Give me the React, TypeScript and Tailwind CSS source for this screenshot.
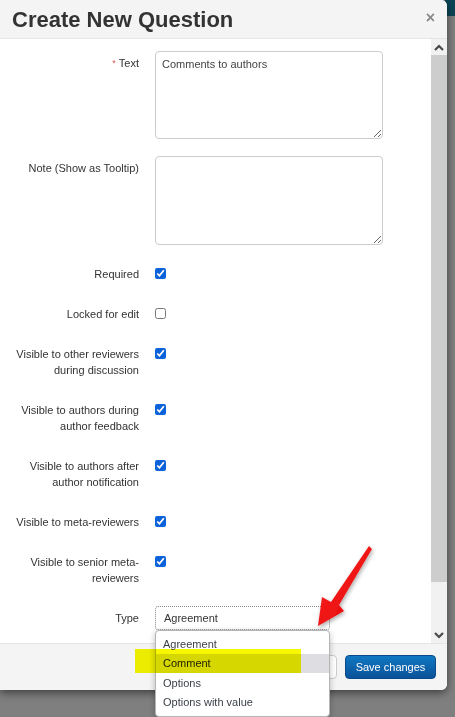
import React from "react";

const checkRows: { label: string; checked: boolean }[] = [
  { label: "Required", checked: true },
  { label: "Locked for edit", checked: false },
  { label: "Visible to other reviewers during discussion", checked: true },
  { label: "Visible to authors during author feedback", checked: true },
  { label: "Visible to authors after author notification", checked: true },
  { label: "Visible to meta-reviewers", checked: true },
  { label: "Visible to senior meta-reviewers", checked: true },
];

const options = ["Agreement", "Comment", "Options", "Options with value"];

const Chevron = ({ up }: { up?: boolean }) => (
  <svg width="10" height="7" viewBox="0 0 10 7" className="block">
    <polyline
      points={up ? "1,6 5,2 9,6" : "1,1 5,5 9,1"}
      fill="none"
      stroke="#4a4a4a"
      strokeWidth="2.2"
    />
  </svg>
);

const FormRow = ({ label, children, required }: { label: string; children: React.ReactNode; required?: boolean }) => (
  <div className="flex items-start gap-[16px]">
    <div className="w-[134px] shrink-0 text-right pt-[4px] leading-[16px]">
      {required && <span className="text-[#d9534f] text-[9px] align-top mr-[3px]">*</span>}
      {label}
    </div>
    {children}
  </div>
);

export default function App() {
  return (
    <div className="relative w-[455px] h-[717px] overflow-hidden bg-[#7f7f7f] font-['Liberation_Sans',Arial,sans-serif] text-[11px] text-[#333]">
      {/* page navbar peeking behind overlay */}
      <div className="absolute right-0 top-0 w-[10px] h-[16px] bg-[#0d4556]" />

      <div className="relative w-[447px] h-[690px] flex flex-col bg-white rounded-tr-[6px] rounded-br-[6px] shadow-[0_3px_9px_rgba(0,0,0,0.5)]">
        {/* header */}
        <div className="h-[39px] shrink-0 flex items-center justify-between pl-[12px] pr-[12px] bg-[#f4f4f4] border-b border-[#e5e5e5] rounded-tr-[6px]">
          <h2 className="text-[22px] font-bold leading-none text-[#333] pt-[1px]">Create New Question</h2>
          <span className="text-[16px] font-bold leading-none text-[#8a8a8a] -mt-[3px]">×</span>
        </div>

        {/* body */}
        <div className="h-[604px] shrink-0 flex">
          <div className="flex-1 pt-[12px] pl-[5px]">
            <FormRow label="Text" required>
              <textarea
                readOnly
                value="Comments to authors"
                className="w-[228px] h-[88px] border border-[#ccc] rounded-[4px] px-[6px] py-[5px] text-[11px] leading-[14px] text-[#444] outline-none"
              />
            </FormRow>
            <div className="mt-[17px]">
              <FormRow label="Note (Show as Tooltip)">
                <textarea
                  readOnly
                  className="w-[228px] h-[89px] border border-[#ccc] rounded-[4px] px-[6px] py-[5px] text-[11px] outline-none"
                />
              </FormRow>
            </div>

            {checkRows.map((r, i) => (
              <div key={r.label} className={i === 0 ? "mt-[21px]" : "mt-[24px]"}>
                <div className="flex items-start gap-[16px]">
                  <div className="w-[134px] shrink-0 text-right leading-[16px]">{r.label}</div>
                  <input
                    type="checkbox"
                    defaultChecked={r.checked}
                    className="w-[11px] h-[11px] m-0 mt-[2px] accent-[#0b63d9]"
                  />
                </div>
              </div>
            ))}

            <div className="mt-[20px]">
              <FormRow label="Type">
                <div className="relative w-[175px] h-[24px]">
                  <div className="h-full border border-dotted border-[#888] rounded-[3px] pl-[8px] flex items-center text-[11px] text-[#333]">
                    Agreement
                  </div>
                  {/* open option list */}
                  <div className="absolute left-0 top-[24px] z-10 w-[175px] bg-white border border-[#b5b5b5] rounded-[4px] shadow-[0_2px_6px_rgba(0,0,0,0.25)] pt-[3px] pb-[4px]">
                    {options.map((o) => (
                      <div
                        key={o}
                        className={`h-[19.5px] flex items-center px-[7px] text-[11px] ${o === "Comment" ? "bg-[#dddde2] text-[#222]" : "text-[#3a3f48]"}`}
                      >
                        {o}
                      </div>
                    ))}
                  </div>
                </div>
              </FormRow>
            </div>
          </div>

          {/* scrollbar */}
          <div className="w-[16px] shrink-0 flex flex-col bg-[#f1f1f1]">
            <div className="h-[16px] flex items-center justify-center">
              <Chevron up />
            </div>
            <div className="h-[527px] bg-[#cdcdcd]" />
            <div className="flex-1" />
            <div className="h-[16px] flex items-center justify-center">
              <Chevron />
            </div>
          </div>
        </div>

        {/* footer */}
        <div className="flex-1 flex items-center justify-end gap-[8px] pr-[11px] bg-[#f4f4f4] border-t border-[#e5e5e5] rounded-br-[6px]">
          <button className="h-[24px] w-[50px] bg-white border border-[#ccc] rounded-[4px] text-[11px] text-[#333]">
            Close
          </button>
          <button className="h-[24px] w-[91px] rounded-[4px] border border-[#0a4a8a] bg-gradient-to-b from-[#1178c2] to-[#0a5299] text-white text-[11px]">
            Save changes
          </button>
        </div>
      </div>

      {/* yellow marker highlight */}
      <div className="absolute left-[135px] top-[649px] w-[166px] h-[24px] z-20 bg-[#f7f700] mix-blend-multiply" />

      {/* red annotation arrow */}
      <svg className="absolute inset-0 z-30 pointer-events-none" width="455" height="717">
        <defs>
          <filter id="sh" x="-20%" y="-20%" width="140%" height="140%">
            <feDropShadow dx="1" dy="2" stdDeviation="2" floodColor="#000" floodOpacity="0.35" />
          </filter>
          <linearGradient id="rg" x1="0" y1="0" x2="1" y2="1">
            <stop offset="0" stopColor="#ff2a2a" />
            <stop offset="1" stopColor="#e00000" />
          </linearGradient>
        </defs>
        <polygon
          points="369,546 372,549 339,605 344,611 318,626 322,597 331,602"
          fill="url(#rg)"
          filter="url(#sh)"
        />
      </svg>
    </div>
  );
}
